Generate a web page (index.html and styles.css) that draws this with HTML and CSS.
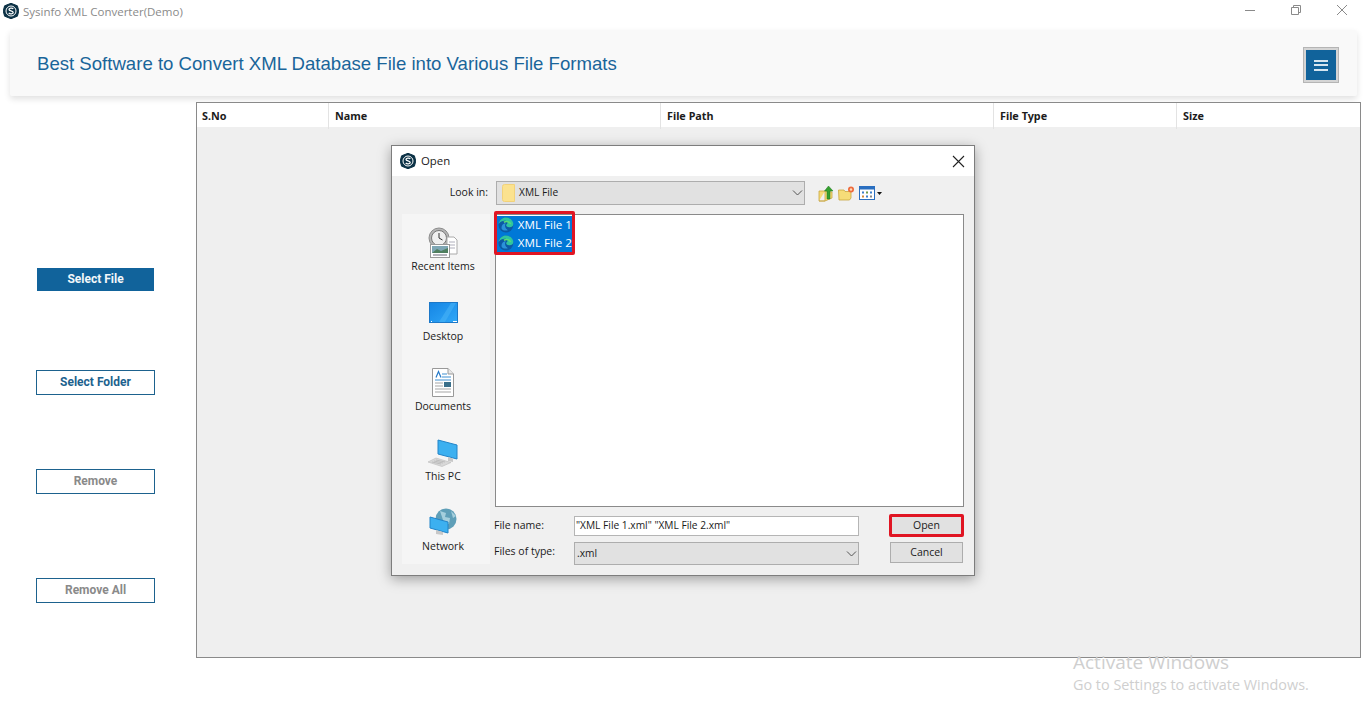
FILE: index.html
```html
<!DOCTYPE html>
<html lang="en">
<head>
<meta charset="utf-8">
<title>Sysinfo XML Converter(Demo)</title>
<link rel="stylesheet" href="styles.css">
</head>
<body>
<svg class="defs" width="0" height="0" aria-hidden="true">
  <defs>
    <g id="logo">
      <path d="M8 0.3 14.4 2.8 15.8 8 14.4 13.2 8 15.7 1.6 13.2 0.2 8 1.6 2.8Z" fill="#0c3246" stroke="#0c3246" stroke-linejoin="round"/>
      <circle cx="8" cy="8" r="5" fill="none" stroke="#fff" stroke-width="1"/>
      <path d="M10.3 5.8C9.2 4.7 6 5 6 6.5 6 8.2 10.2 7.6 10.2 9.5 10.2 11 7 11.3 5.7 10.1" fill="none" stroke="#fff" stroke-width="1.3"/>
    </g>
    <g id="edge">
      <circle cx="8" cy="8" r="7.5" fill="#0c59a4"/>
      <path d="M0.6 7C1.5 2.8 4.6 0.5 8 0.5c4 0 7.5 3 7.5 6.8 0 2.2-2.2 3.2-4.2 3-2-0.2-3-1-3-2 0-1.5 2-1.6 1.2-3.4C8.6 3.2 3 3 0.6 7Z" fill="#2fc4a0"/>
      <path d="M6 5.2c3-1.5 5.8-0.4 6.8 1.8" fill="none" stroke="#57dc78" stroke-width="1.6"/>
      <path d="M3.5 11c0-3 2-4.8 4.5-4.8-1.5 1.5-1.2 5 2 7-2.6 1.2-6.5 0-6.5-2.2Z" fill="#2b92d8"/>
    </g>
  </defs>
</svg>

<div class="titlebar">
  <svg class="app-logo" width="16" height="16" viewBox="0 0 16 16"><use href="#logo"/></svg>
  <span class="app-name">Sysinfo XML Converter(Demo)</span>
  <div class="win-controls">
    <span class="win-btn"><svg width="12" height="12" viewBox="0 0 12 12"><path d="M1 6.5H11" stroke="#8a8a8a" fill="none"/></svg></span>
    <span class="win-btn"><svg width="12" height="12" viewBox="0 0 12 12"><path d="M1.5 3.5H8.5V10.5H1.5ZM3.5 3.5V1.5H10.5V8.5H8.5" stroke="#8a8a8a" fill="none"/></svg></span>
    <span class="win-btn"><svg width="12" height="12" viewBox="0 0 12 12"><path d="M1 1 11 11M11 1 1 11" stroke="#8a8a8a" fill="none"/></svg></span>
  </div>
</div>

<header class="banner">
  <h1 class="banner-title">Best Software to Convert XML Database File into Various File Formats</h1>
  <button class="menu-btn" type="button" aria-label="Menu"><span></span><span></span><span></span></button>
</header>

<main class="workspace">
  <nav class="side">
    <button class="side-btn primary" type="button">Select File</button>
    <button class="side-btn folder" type="button">Select Folder</button>
    <button class="side-btn muted remove" type="button">Remove</button>
    <button class="side-btn muted remove-all" type="button">Remove All</button>
  </nav>
  <section class="table">
    <div class="thead">
      <div class="th">S.No</div>
      <div class="th">Name</div>
      <div class="th">File Path</div>
      <div class="th">File Type</div>
      <div class="th">Size</div>
    </div>
  </section>
</main>

<div class="dialog">
  <div class="dlg-title">
    <svg width="16" height="16" viewBox="0 0 16 16"><use href="#logo"/></svg>
    <span class="dlg-name">Open</span>
    <svg class="dlg-close" width="13" height="13" viewBox="0 0 13 13"><path d="M1 1 12 12M12 1 1 12" stroke="#222" stroke-width="1.1" fill="none"/></svg>
  </div>
  <div class="dlg-body">
    <div class="lookin">
      <label class="lookin-label">Look in:</label>
      <div class="combo lookin-combo">
        <svg width="13" height="18" viewBox="0 0 13 18"><path d="M0.5 2.5Q0.5 0.5 2.5 0.5H12.5V17.5H2.5Q0.5 17.5 0.5 15.5Z" fill="#fbe28f" stroke="#f2d27a"/></svg>
        <span>XML File</span>
        <svg class="chev" width="11" height="6" viewBox="0 0 11 6"><path d="M1 0.5 5.5 5 10 0.5" fill="none" stroke="#555"/></svg>
      </div>
      <div class="tools">
        <svg width="16" height="17" viewBox="0 0 16 17"><path d="M1 6H7V16H1Z M1 16 7 16 14 13 14 7 7 6" fill="#f6dc78" stroke="#c9a63f" stroke-width=".8"/><path d="M9 14V6H6.5L10.5 1 15 6H12V14Z" fill="#35a02f" stroke="#1f7a1f" stroke-width=".5"/></svg>
        <svg width="17" height="15" viewBox="0 0 17 15"><path d="M0.5 4H6L7 5.5H13V12L11.5 14H1Z" fill="#f6dc78" stroke="#c9a63f" stroke-width=".8"/><circle cx="13" cy="3.5" r="3" fill="#ee6b3c"/><circle cx="13" cy="3.5" r="1.2" fill="#ffd9b8"/></svg>
        <svg width="16" height="14" viewBox="0 0 16 14"><rect x=".5" y=".5" width="15" height="13" fill="#fff" stroke="#2a6fc0"/><rect x=".5" y=".5" width="15" height="3" fill="#2a6fc0"/><path d="M3 5.5h2v2H3z" fill="#3d7fc9"/><path d="M7 5.5h2v2H7z" fill="#6a9a4a"/><path d="M11 5.5h2v2h-2z" fill="#3d7fc9"/><path d="M3 9.5h2v2H3z" fill="#d08a3a"/><path d="M7 9.5h2v2H7z" fill="#3d7fc9"/><path d="M11 9.5h2v2h-2z" fill="#888"/></svg>
        <svg class="caret" width="5" height="3" viewBox="0 0 5 3"><path d="M0 0H5L2.5 3Z" fill="#111"/></svg>
      </div>
    </div>
    <div class="dlg-main">
      <div class="places">
        <div class="place">
          <span class="place-icon">
            <svg width="30" height="31" viewBox="0 0 30 31">
              <circle cx="11" cy="11" r="10" fill="#b5b5b5" stroke="#8d8d8d"/>
              <circle cx="11" cy="11" r="7.5" fill="#efefef" stroke="#777"/>
              <path d="M11 6V11L14.5 13" fill="none" stroke="#333"/>
              <path d="M19 10H26L29 13V27H19Z" fill="#fff" stroke="#aaa"/>
              <path d="M21 15H27M21 18H27M21 21H27" stroke="#99a" stroke-width=".8"/>
              <rect x="2.5" y="17.5" width="19" height="13" fill="#fff" stroke="#999"/>
              <rect x="4" y="19" width="16" height="7" fill="#7ea6b4"/>
              <path d="M4 26 9 22 13 24 20 21V26Z" fill="#4f7f5f"/>
              <path d="M5 28H19" stroke="#667"/>
            </svg>
          </span>
          <span class="place-label">Recent Items</span>
        </div>
        <div class="place">
          <span class="place-icon">
            <svg width="29" height="21" viewBox="0 0 29 21">
              <defs><linearGradient id="desk" x1="0" y1="0" x2="1" y2="1"><stop offset="0" stop-color="#1585e4"/><stop offset="1" stop-color="#30a8f8"/></linearGradient></defs>
              <rect x=".5" y=".5" width="28" height="20" fill="url(#desk)" stroke="#1c78c8"/>
              <path d="M10 20 22 1H27L16 20Z" fill="#52baf9" opacity=".45"/>
              <path d="M2 19.5H3M24 19.5H28" stroke="#fff"/>
            </svg>
          </span>
          <span class="place-label">Desktop</span>
        </div>
        <div class="place">
          <span class="place-icon">
            <svg width="22" height="29" viewBox="0 0 22 29">
              <path d="M.5 .5H16L21.5 6V28.5H.5Z" fill="#fff" stroke="#999"/>
              <path d="M16 .5V6H21.5" fill="#e8e8e8" stroke="#999"/>
              <path d="M4 9.5 6.5 3.5 9 9.5" fill="none" stroke="#2579c8" stroke-width="1.2"/>
              <path d="M10 6H15M10 9H19M3 12H19" stroke="#3f8fd0"/>
              <rect x="12" y="14" width="7" height="5" fill="#3a6f8a"/>
              <path d="M3 15H11M3 18H11M3 21H19M3 24H19" stroke="#a5a5a5"/>
            </svg>
          </span>
          <span class="place-label">Documents</span>
        </div>
        <div class="place">
          <span class="place-icon">
            <svg width="32" height="28" viewBox="0 0 32 28">
              <path d="M11 1 30 6V20L11 15Z" fill="#3cb0f0" stroke="#2384c8"/>
              <path d="M21 18V22L26 23 26 19.5Z" fill="#c8c8c8"/>
              <path d="M1 23 9 19 24 23.5 15 27.5Z" fill="#d8d8d8" stroke="#bbb" stroke-width=".6"/>
              <path d="M5 23 14 25M7 22 16 24M9 21 18 23" stroke="#aaa" stroke-width=".6"/>
            </svg>
          </span>
          <span class="place-label">This PC</span>
        </div>
        <div class="place">
          <span class="place-icon">
            <svg width="29" height="29" viewBox="0 0 29 29">
              <circle cx="17" cy="11" r="10.5" fill="#5f9fb8"/>
              <path d="M11 3 17 5 16 9 21 10 20 16 15 15 13 9Z" fill="#a5cfdd"/>
              <path d="M22 3 27 8 24 10Z" fill="#a5cfdd"/>
              <path d="M1 9 19 14V25L1 20Z" fill="#3cb0f0" stroke="#2384c8"/>
              <path d="M7 22 14 24 14 27 7 26Z" fill="#c8c8c8"/>
            </svg>
          </span>
          <span class="place-label">Network</span>
        </div>
      </div>
      <div class="files">
        <div class="list">
          <div class="selection">
            <div class="file"><svg width="16" height="16" viewBox="0 0 16 16"><use href="#edge"/></svg><span>XML File 1</span></div>
            <div class="file"><svg width="16" height="16" viewBox="0 0 16 16"><use href="#edge"/></svg><span>XML File 2</span></div>
          </div>
          <div class="sel-mark"></div>
        </div>
        <div class="form">
          <label class="form-label">File name:</label>
          <div class="input">"XML File 1.xml" "XML File 2.xml"</div>
          <button class="dlg-btn open" type="button">Open</button>
          <label class="form-label type">Files of type:</label>
          <div class="combo type-combo"><span>.xml</span><svg class="chev" width="11" height="6" viewBox="0 0 11 6"><path d="M1 0.5 5.5 5 10 0.5" fill="none" stroke="#555"/></svg></div>
          <button class="dlg-btn cancel" type="button">Cancel</button>
        </div>
      </div>
    </div>
  </div>
</div>

<div class="activate">
  <div class="act-1">Activate Windows</div>
  <div class="act-2">Go to Settings to activate Windows.</div>
</div>
</body>
</html>
```

FILE: styles.css
```css
* { box-sizing: border-box; }
html, body { height: 100%; }
body {
  margin: 0;
  background: #fff;
  font-family: "Open Sans", "Liberation Sans", sans-serif;
  overflow: hidden;
  position: relative;
}
.defs { position: absolute; }
button { font-family: inherit; cursor: default; }

.titlebar {
  height: 30px;
  display: flex;
  align-items: flex-start;
  padding: 3px 1px 0 3px;
}
.app-logo { flex: none; }
.app-name {
  margin-left: 4px;
  margin-top: 1px;
  font-size: 11.5px;
  line-height: 16px;
  color: #8a8a8a;
}
.win-controls { margin-left: auto; display: flex; padding-top: 1px; }
.win-btn { width: 46px; display: flex; justify-content: center; }

.banner {
  height: 66px;
  margin: 0 9px 0 10px;
  padding: 0 18px 0 27px;
  background: #f9f9f9;
  box-shadow: 0 3px 6px rgba(0,0,0,.12);
  border-radius: 2px;
  display: flex;
  align-items: center;
  justify-content: space-between;
}
.banner-title {
  margin: 1px 0 0;
  font: 400 18.6px/24px "Liberation Sans", Arial, sans-serif;
  color: #19659a;
}
.menu-btn {
  width: 36px;
  height: 36px;
  margin-top: 4px;
  padding: 0;
  background: #11639b;
  border: 1px solid #b5b5b5;
  outline: 2px solid #d5d5d5;
  outline-offset: -3px;
  display: flex;
  flex-direction: column;
  align-items: center;
  justify-content: center;
  gap: 2.5px;
}
.menu-btn span { width: 14px; height: 2px; background: #d6e6f0; }

.workspace {
  margin-top: 6px;
  display: flex;
  align-items: flex-start;
}
.side {
  width: 196px;
  flex: none;
  padding: 166px 0 0 36px;
  display: flex;
  flex-direction: column;
  align-items: flex-start;
}
.side-btn {
  width: 119px;
  height: 25px;
  padding: 0 0 2px;
  background: #fff;
  border: 1px solid #1d628e;
  font: 700 12px/1 Roboto, "Liberation Sans", sans-serif;
  color: #1d628e;
}
.side-btn.primary {
  width: 117px;
  height: 23px;
  margin-left: 1px;
  background: #11639b;
  border: 0;
  color: #f2f7fa;
}
.side-btn.muted { color: #8a8a8a; }
.side-btn.folder { margin-top: 79px; }
.side-btn.remove { margin-top: 74px; }
.side-btn.remove-all { margin-top: 84px; }

.table {
  width: 1165px;
  height: 556px;
  border: 1px solid #8a8a8a;
  background: #efefef;
}
.thead {
  height: 24px;
  background: #fff;
  display: grid;
  grid-template-columns: 132px 332px 333px 183px 1fr;
}
.th {
  padding-left: 6px;
  border-right: 1px solid #e3e3e3;
  font: 700 10.8px/26px "Noto Sans", "DejaVu Sans", sans-serif;
  color: #1c1c1c;
}
.th:first-child { padding-left: 5px; }
.th:last-child { border-right: 0; }

.dialog {
  position: absolute;
  left: 391px;
  top: 145px;
  width: 584px;
  height: 431px;
  background: #f0f0f0;
  border: 1px solid #7d7d7d;
  box-shadow: 0 3px 12px rgba(0,0,0,.35);
  font-size: 10.5px;
  color: #1a1a1a;
}
.dlg-title {
  height: 30px;
  background: #fff;
  display: flex;
  align-items: center;
  padding: 0 9px 0 8px;
}
.dlg-name { margin: -2px 0 0 5px; font-size: 11.4px; }
.dlg-close { margin-left: auto; }
.dlg-body { padding: 5px 10px 0; }

.lookin { display: flex; align-items: center; height: 24px; }
.lookin-label { width: 86px; margin-top: -2px; text-align: right; }
.combo {
  display: flex;
  align-items: center;
  background: #e1e1e1;
  border: 1px solid #adadad;
}
.lookin-combo {
  width: 309px;
  height: 24px;
  margin-left: 8px;
  padding-left: 5px;
  gap: 4px;
  font-size: 10.2px;
}
.lookin-combo span { margin-top: -2px; }
.combo .chev { margin-left: auto; margin-right: 1px; }
.tools {
  margin-left: 13px;
  display: flex;
  align-items: center;
  gap: 4px;
}
.caret { margin-left: -2px; }

.dlg-main { margin-top: 9px; display: flex; }
.places {
  width: 88px;
  height: 350px;
  margin-right: 4px;
  padding-right: 6px;
  background: #f5f5f5;
}
.place {
  height: 70px;
  padding-top: 12px;
  display: flex;
  flex-direction: column;
  align-items: center;
}
.place-icon {
  height: 33px;
  display: flex;
  align-items: center;
  justify-content: center;
}
.place-label { line-height: 14px; white-space: nowrap; }

.files { width: 470px; }
.list {
  position: relative;
  height: 293px;
  margin-left: 1px;
  padding: 1px;
  background: #fff;
  border: 1px solid #8a8a8a;
}
.selection { width: 75px; background: #0078d7; }
.file {
  height: 18px;
  display: flex;
  align-items: center;
  padding-left: 1px;
  gap: 4px;
  color: #fff;
  font-size: 11.6px;
  white-space: nowrap;
}
.file span { margin-top: -2px; }
.sel-mark {
  position: absolute;
  left: -2px;
  top: -4px;
  width: 81px;
  height: 44px;
  border: 3px solid #e01523;
  border-radius: 2px;
}

.form {
  margin-top: 7px;
  display: grid;
  grid-template-columns: 80px 285px 30px 75px;
  grid-template-rows: 23px 23px;
  row-gap: 5px;
  align-items: center;
}
.form-label { margin-top: -2px; line-height: 14px; }
.form-label.type { margin-top: -5px; }
.input {
  grid-column: 2;
  height: 20px;
  padding: 0 0 1px 1px;
  background: #fff;
  border: 1px solid #b5b5b5;
  font-size: 10.2px;
  line-height: 16px;
  white-space: nowrap;
}
.type-combo {
  grid-column: 2;
  height: 23px;
  padding-left: 2px;
  font-size: 10.2px;
}
.type-combo span { margin-top: -2px; }
.dlg-btn {
  grid-column: 4;
  padding: 0 0 2px;
  background: #e1e1e1;
  border: 1px solid #adadad;
  font-size: 10.5px;
  color: #1a1a1a;
}
.dlg-btn.open { height: 23px; border: 3px solid #e01523; border-radius: 2px; }
.dlg-btn.cancel { width: 73px; height: 21px; margin: -2px 0 0 1px; }

.activate {
  position: absolute;
  left: 1073px;
  top: 650px;
  color: #cfcfcf;
  white-space: nowrap;
}
.act-1 { font-size: 19px; line-height: 24px; }
.act-2 { font-size: 14.4px; line-height: 22px; }
```
